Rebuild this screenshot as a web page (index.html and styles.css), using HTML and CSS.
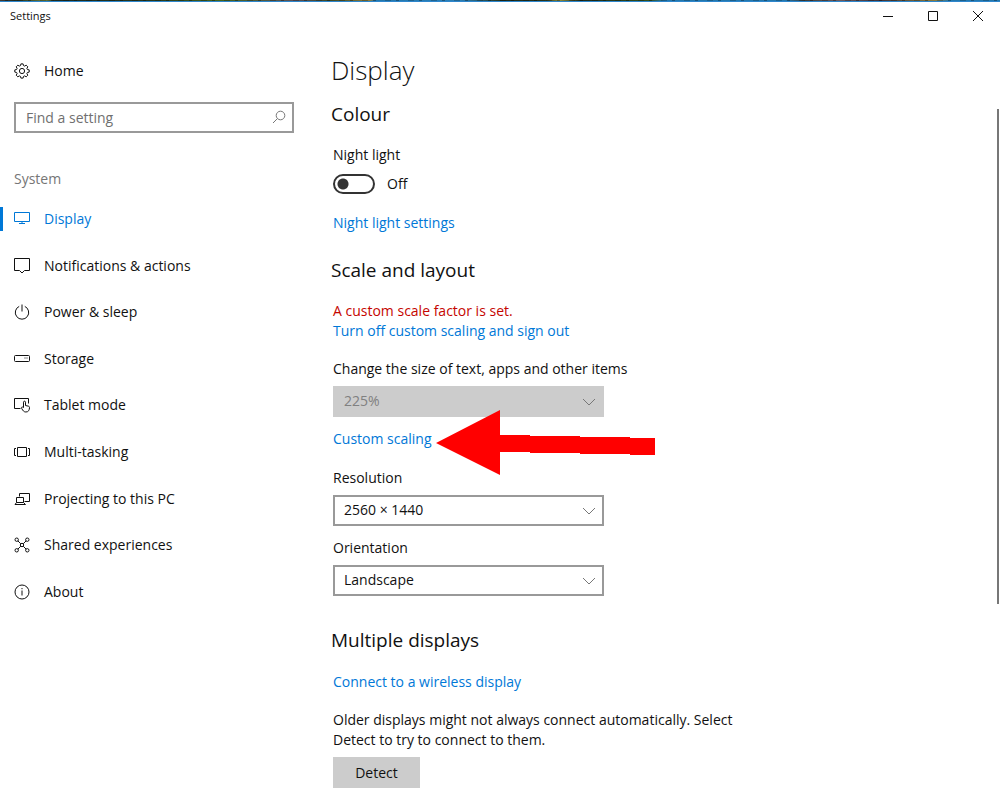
FILE: index.html
```html
<!DOCTYPE html>
<html lang="en-GB">
<head>
    <meta charset="UTF-8">
    <meta name="viewport" content="width=device-width, initial-scale=1.0">
    <title>Settings</title>
    <link rel="stylesheet" href="styles.css">
</head>
<body>
    <div class="desktop-edge"></div>
    <header class="titlebar">
        <span class="title">Settings</span>
        <div class="window-buttons">
            <button type="button" aria-label="Minimise">
                <svg width="12" height="12" viewBox="0 0 12 12"><path d="M1 6.5h10"/></svg>
            </button>
            <button type="button" aria-label="Maximise">
                <svg width="12" height="12" viewBox="0 0 12 12"><path d="M1.500 1.500h9v9h-9z"/></svg>
            </button>
            <button type="button" aria-label="Close">
                <svg width="12" height="12" viewBox="0 0 12 12"><path d="M1 1l10 10M11 1L1 11"/></svg>
            </button>
        </div>
    </header>
    <div class="layout">
        <aside class="sidebar">
            <a href="#" class="home">
                <svg class="icon" viewBox="0 0 16 16"><path d="M6.900.9h2.200l.4 1.700 1.100.5 1.600-.9 1.600 1.600-.9 1.600.5 1.100 1.800.4v2.200l-1.800.4-.5 1.100.9 1.600-1.600 1.600-1.600-.9-1.100.5-.4 1.700H6.900l-.4-1.700-1.100-.5-1.600.9-1.600-1.600.9-1.600-.5-1.100L.8 9.100V6.900l1.800-.4.5-1.100-.9-1.600 1.600-1.600 1.600.9 1.100-.5z"/><circle cx="8" cy="8" r="2.600"/></svg>
                Home
            </a>
            <div class="search">
                <input type="text" placeholder="Find a setting" aria-label="Find a setting">
                <svg width="14" height="14" viewBox="0 0 14 14"><circle cx="8.500" cy="5.500" r="4.300"/><path d="M5.400 8.600L1 13"/></svg>
            </div>
            <div class="group">System</div>
            <nav>
                <ul>
                    <li><a href="#" class="active">
                        <svg class="icon" viewBox="0 0 16 16"><path d="M.5 1.500h15v9H.5zM8 10.500v2M5 12.500h6"/></svg>
                        Display
                    </a></li>
                    <li><a href="#">
                        <svg class="icon" viewBox="0 0 16 16"><path d="M.5.5h15v12h-5L8 15l-2.500-2.500h-5z"/></svg>
                        Notifications &amp; actions
                    </a></li>
                    <li><a href="#">
                        <svg class="icon" viewBox="0 0 16 16"><path d="M5.200 2.400a6.700 6.700 0 1 0 5.600 0M8 .5v7"/></svg>
                        Power &amp; sleep
                    </a></li>
                    <li><a href="#">
                        <svg class="icon" viewBox="0 0 16 16"><rect x=".5" y="4.500" width="15" height="6" rx="1"/><path d="M10.500 7h1M12.500 7h1"/></svg>
                        Storage
                    </a></li>
                    <li><a href="#">
                        <svg class="icon" viewBox="0 0 16 16"><path d="M6.500 11.500h-6v-10h14v5"/><path d="M9.500 10.500V5.200c0-1.400 2-1.400 2 0v3.300l3 .7c.8.2 1 .7 1 1.400-.1 2.400-.9 4.400-3.600 4.400-2 0-2.800-1.100-4.300-3.700-.6-1.200.7-1.700 1.900-.8z"/></svg>
                        Tablet mode
                    </a></li>
                    <li><a href="#">
                        <svg class="icon" viewBox="0 0 16 16"><path d="M3.500 3.500h9v9h-9zM2 4.500H.5v7H2M14 4.500h1.500v7H14"/></svg>
                        Multi-tasking
                    </a></li>
                    <li><a href="#">
                        <svg class="icon" viewBox="0 0 16 16"><path d="M5.500 5.500v-3h10v8h-5M2.500 6.500h7v5h-7zM2.500 11.500l-1.500 2h10.500l-2-2"/></svg>
                        Projecting to this PC
                    </a></li>
                    <li><a href="#">
                        <svg class="icon" viewBox="0 0 16 16"><circle cx="2.700" cy="2.700" r="1.700"/><circle cx="13.300" cy="2.700" r="1.700"/><circle cx="2.700" cy="13.300" r="1.700"/><circle cx="13.300" cy="13.300" r="1.700"/><circle cx="8" cy="8" r="1.700"/><path d="M4 4l2.800 2.800M12 4L9.200 6.800M4 12l2.800-2.800M12 12L9.200 9.200"/></svg>
                        Shared experiences
                    </a></li>
                    <li><a href="#">
                        <svg class="icon" viewBox="0 0 16 16"><circle cx="8" cy="8" r="7"/><path d="M8 6.500v5M8 4v1.200"/></svg>
                        About
                    </a></li>
                </ul>
            </nav>
        </aside>

        <main>
            <h1>Display</h1>

            <section>
                <h2>Colour</h2>
                <label for="nightLight">Night light</label>
                <div class="toggle">
                    <input type="checkbox" id="nightLight">
                    <span>Off</span>
                </div>
                <a href="#">Night light settings</a>
            </section>

            <section class="scale">
                <h2>Scale and layout</h2>
                <p class="warning">A custom scale factor is set.</p>
                <a href="#">Turn off custom scaling and sign out</a>
                <div class="field size">
                    <label for="size">Change the size of text, apps and other items</label>
                    <div class="select">
                        <select id="size" disabled><option>225%</option></select>
                        <svg width="14" height="8" viewBox="0 0 14 8"><path d="M1 1l6 6 6-6"/></svg>
                    </div>
                </div>
                <div class="custom">
                    <a href="#">Custom scaling</a>
                    <svg class="arrow" width="219" height="66" viewBox="0 0 219 66"><path d="M0 33L64 0v25h30v1h50v1h50v1h25v17h-25v-1h-50v-1H94v-1H64v23z"/></svg>
                </div>
                <div class="field">
                    <label for="resolution">Resolution</label>
                    <div class="select">
                        <select id="resolution"><option>2560 × 1440</option></select>
                        <svg width="14" height="8" viewBox="0 0 14 8"><path d="M1 1l6 6 6-6"/></svg>
                    </div>
                </div>
                <div class="field">
                    <label for="orientation">Orientation</label>
                    <div class="select">
                        <select id="orientation"><option>Landscape</option></select>
                        <svg width="14" height="8" viewBox="0 0 14 8"><path d="M1 1l6 6 6-6"/></svg>
                    </div>
                </div>
            </section>

            <section class="multiple">
                <h2>Multiple displays</h2>
                <a href="#">Connect to a wireless display</a>
                <p class="hint">Older displays might not always connect automatically. Select Detect to try to connect to them.</p>
                <button type="button" class="detect">Detect</button>
            </section>
        </main>
    </div>
    <div class="scrollbar"></div>
</body>
</html>
```
FILE: styles.css
```css
* {
    box-sizing: border-box;
}
body {
    margin: 0;
    background-color: #fff;
    color: #111;
    font-family: "Open Sans", "Noto Sans", sans-serif;
    font-size: 14px;
    line-height: 20px;
}
h1, h2, p, ul {
    margin: 0;
    padding: 0;
    font-weight: normal;
}
a {
    color: #0078d7;
    text-decoration: none;
}
input, select, button {
    font: inherit;
    color: inherit;
}
svg {
    fill: none;
    stroke: currentColor;
}

/* Sliver of wallpaper above the window */
.desktop-edge {
    height: 2px;
    background:
        repeating-linear-gradient(to right, transparent 0 5px, rgba(0, 0, 0, 0.3) 5px 8px, transparent 8px 17px, rgba(0, 0, 0, 0.2) 17px 23px),
        linear-gradient(to right, #443c36, #1c2a20 3%, #6c7b3a 9%, #1c2a20 11%, #26361c 30%, #44641c 44%, #5a5058 59%, #3c4824 66%, #8c7c3c 74%, #2277ad 75%, #2b80b8 92%, #26341c 100%) 0 0 / 50% 100% no-repeat,
        linear-gradient(to right, #1c2818, #26341c 9%, #8c8a3a 12%, #1c2818 16%, #34501c 30%, #2277ad 33%, #2277ad 57%, #3c3c38 61%, #6c5c60 68%, #3c3038 76%, #8c7c3c 87%, #2277ad 90%) 100% 0 / 50% 100% no-repeat;
    border-bottom: 1px solid #2e86cc;
}
.titlebar {
    display: flex;
    justify-content: space-between;
    height: 30px;
}
.title {
    padding-left: 10px;
    font-size: 11px;
    line-height: 28px;
}
.window-buttons {
    display: flex;
}
.window-buttons button {
    display: flex;
    align-items: center;
    justify-content: center;
    width: 45px;
    height: 28px;
    padding: 0;
    border: 0;
    background: none;
}

.layout {
    display: grid;
    grid-template-columns: 294px 1fr;
    column-gap: 39px;
}
.icon {
    flex: none;
    width: 16px;
    height: 16px;
}
.home {
    display: flex;
    align-items: center;
    gap: 14px;
    margin-top: 29px;
    padding-left: 14px;
    color: #111;
}
.search {
    position: relative;
    margin: 21px 0 0 14px;
}
.search input {
    display: block;
    width: 100%;
    height: 31px;
    padding: 0 36px 0 10px;
    border: 2px solid #999;
    border-radius: 0;
}
.search input::placeholder {
    color: #707070;
    opacity: 1;
}
.search svg {
    position: absolute;
    top: 8px;
    right: 8px;
    color: #777;
}
.group {
    margin: 36px 0 7px 14px;
    color: #767676;
}
nav ul {
    display: grid;
    grid-auto-rows: 1fr;
    height: 419px;
    list-style: none;
}
nav li {
    display: flex;
    align-items: center;
}
nav a {
    display: flex;
    flex: 1;
    align-items: center;
    gap: 14px;
    height: 24px;
    padding-left: 11px;
    border-left: 3px solid transparent;
    color: #111;
}
nav a.active {
    border-left-color: #0078d7;
    color: #0078d7;
}

main {
    padding: 20px 20px 20px 0;
}
h1, h2 {
    margin-left: -2px;
}
h1 {
    font-size: 26px;
    font-weight: 300;
    line-height: 36px;
}
h2 {
    margin-bottom: 17px;
    font-size: 19px;
    line-height: 28px;
}
section {
    margin-top: 12px;
}
section > a, label {
    display: block;
    width: fit-content;
}
.toggle {
    display: flex;
    align-items: center;
    gap: 12px;
    margin: 9px 0 19px;
}
.toggle input {
    appearance: none;
    width: 42px;
    height: 20px;
    margin: 0;
    border: 2px solid #333;
    border-radius: 10px;
    background: radial-gradient(circle at 8px 50%, #333 5px, transparent 6px);
}
.scale {
    margin-top: 23px;
}
.warning {
    color: #c50500;
}
.field {
    margin-top: 12px;
}
.size {
    margin-top: 18px;
}
.select {
    position: relative;
    width: 271px;
    margin-top: 7px;
}
.select select {
    appearance: none;
    display: block;
    width: 100%;
    height: 31px;
    padding: 0 30px 1px 9px;
    border: 2px solid #999;
    border-radius: 0;
    background-color: #fff;
}
.select select:disabled {
    border-color: #ccc;
    background-color: #ccc;
    color: #808080;
    opacity: 1;
}
.select svg {
    position: absolute;
    top: 12px;
    right: 8px;
    color: #777;
    pointer-events: none;
}
.custom {
    position: relative;
    margin: 12px 0 19px;
}
/* Red pointer drawn over the page */
.arrow {
    position: absolute;
    top: -19px;
    left: 103px;
    fill: #f00;
    stroke: none;
}
.multiple {
    margin-top: 30px;
}
.multiple h2 {
    margin-bottom: 18px;
}
.hint {
    max-width: 410px;
    margin: 18px 0 7px;
}
.detect {
    display: block;
    width: 87px;
    height: 31px;
    padding: 0;
    border: 0;
    background-color: #ccc;
}
.scrollbar {
    position: absolute;
    top: 109px;
    right: 1px;
    width: 2px;
    height: 495px;
    background-color: #777;
}
```
